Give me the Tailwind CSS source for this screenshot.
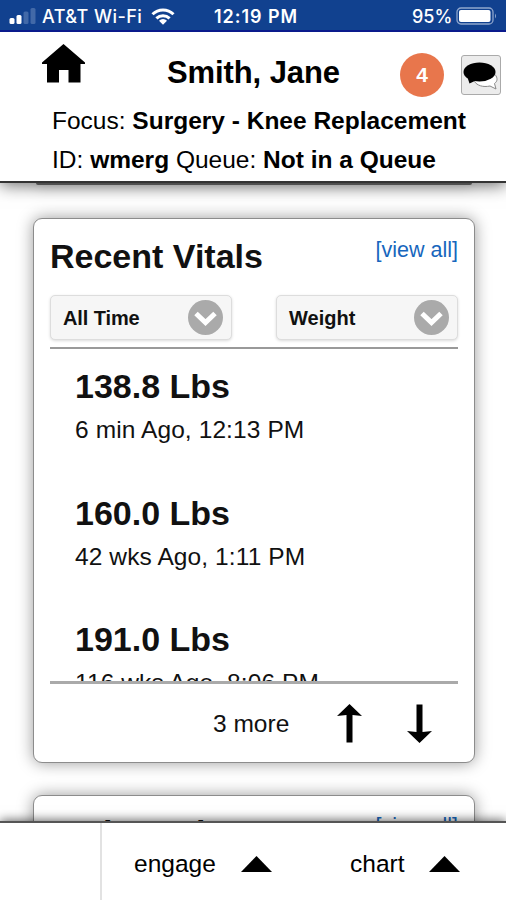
<!DOCTYPE html>
<html lang="en">
<head>
    <meta charset="UTF-8">
    <meta name="viewport" content="width=device-width, initial-scale=1.0">
    <title>Smith, Jane</title>
    <script src="https://cdn.jsdelivr.net/npm/@tailwindcss/browser@4"></script>
</head>
<body class="bg-white">
<div class="h-[900px] w-[506px] overflow-hidden bg-white flex flex-col font-['Liberation_Sans',Arial,sans-serif] text-[#111]">

    <!-- status bar -->
    <div class="relative z-20 h-8 shrink-0 bg-[#11418f] border-b-2 border-[#0a1a8c] flex items-center text-white font-['Inter',sans-serif] text-[18px] font-medium leading-none">
        <div class="w-[214px] flex items-center pl-[9px] pt-[3px]">
            <svg class="w-[27px] h-[17px]" viewBox="0 0 27 17">
                <rect x="0.5" y="10" width="5" height="6" rx="1.5" fill="#fff"/>
                <rect x="7.5" y="7" width="5" height="9" rx="1.5" fill="#fff"/>
                <rect x="14.5" y="3.5" width="5" height="12.5" rx="1.5" fill="#4269a8"/>
                <rect x="21.5" y="0" width="5" height="16" rx="1.5" fill="#4269a8"/>
            </svg>
            <span class="ml-1.5 w-[101px] whitespace-nowrap tracking-[0.45px]">AT&amp;T Wi-Fi</span>
            <svg class="ml-2 w-6 h-[17px]" viewBox="0 0 24 17">
                <g fill="none" stroke="#fff" stroke-width="3">
                    <path d="M1.5 6.3a15 15 0 0 1 21 0"/>
                    <path d="M5.4 10.4a9.5 9.5 0 0 1 13.2 0"/>
                </g>
                <path d="M8 12.7a5.8 5.8 0 0 1 8 0L12 16.8z" fill="#fff"/>
            </svg>
        </div>
        <span class="w-[85px] whitespace-nowrap font-semibold tracking-[0.95px] pt-1">12:19 PM</span>
        <span class="ml-[113px] w-[40px] whitespace-nowrap pt-1">95%</span>
        <svg class="ml-1 mt-0.5 w-[42px] h-[18px]" viewBox="0 0 42 18">
            <rect x="1" y="1" width="36" height="16" rx="4" fill="none" stroke="#8fa6cd" stroke-width="1.3"/>
            <rect x="3" y="3" width="31.5" height="12" rx="2" fill="#fff"/>
            <path d="M39 6.5q2 2.5 0 5z" fill="#8fa6cd"/>
        </svg>
    </div>

    <!-- patient header -->
    <header class="relative z-10 h-[151px] shrink-0 bg-white border-b-2 border-[#333] shadow-[0_2px_16px_rgba(0,0,0,0.6)]">
        <div class="flex h-[69px]">
            <svg class="ml-[42px] mt-3 w-[43px] h-[39px] shrink-0" viewBox="0 0 43 39">
                <path d="M21.5 0L43 18.5V20H38.5V38.5H26.5V26H17V38.5H5V20H0V18.5Z" fill="#000"/>
            </svg>
            <h1 class="ml-[82px] mt-[23px] w-[173px] whitespace-nowrap text-[31px] leading-9 tracking-[-0.1px] font-bold text-black">Smith, Jane</h1>
            <span class="ml-[60px] mt-[21px] size-11 shrink-0 rounded-full bg-[#e8764c] text-white text-[21px] font-bold flex items-center justify-center">4</span>
            <span class="ml-[17px] mt-[23px] size-10 shrink-0 rounded-[3px] border border-[#aaa] bg-[#ececec]">
                <svg class="size-[38px]" viewBox="0 0 38 38">
                    <path d="M33 18.5C36 22 35.5 25.5 32.5 27.5L34 33L28 30C21 31.5 15 29.5 12.5 25.5" fill="#fff" stroke="#888" stroke-width="1"/>
                    <ellipse cx="17.5" cy="16" rx="16" ry="9.5" fill="#000"/>
                    <path d="M5 20L7.5 27.5L15 24z" fill="#000"/>
                </svg>
            </span>
        </div>
        <p class="ml-[52px] whitespace-nowrap text-[24.5px] leading-[39px] text-black">Focus: <b>Surgery - Knee Replacement</b></p>
        <p class="ml-[52px] whitespace-nowrap text-[24.5px] leading-[39px] text-black">ID: <b>wmerg</b> Queue: <b>Not in a Queue</b></p>
    </header>

    <main class="h-[638px] shrink-0 overflow-hidden pl-[33px] pr-[31px]">
        <!-- bottom edge of the card above -->
        <div class="mx-[3px] h-0.5 rounded-b-lg bg-[#777] shadow-[0_0_14px_rgba(0,0,0,0.5)]"></div>

        <section class="mt-[33px] h-[545px] bg-white rounded-[9px] border-[1.5px] border-[#8c8c8c] shadow-[0_0_16px_rgba(0,0,0,0.4)] px-4">
            <div class="flex justify-between h-[76px] pt-[17px]">
                <h2 class="text-[34px] leading-10 font-bold whitespace-nowrap">Recent Vitals</h2>
                <a class="pt-px text-[21.5px] leading-[26px] text-[#1766bd] whitespace-nowrap">[view all]</a>
            </div>
            <div class="flex justify-between h-[54px] border-b-2 border-[#999]">
                <div class="w-[182px] h-[45px] flex items-center justify-between pl-3 pr-2 rounded-[5px] border border-[#ddd] bg-[#f6f6f6] shadow-[0_1px_3px_rgba(0,0,0,0.15)]">
                    <span class="pt-px text-[20px] tracking-[-0.1px] font-bold">All Time</span>
                    <svg class="size-[35px]" viewBox="0 0 35 35"><circle cx="17.5" cy="17.5" r="17.5" fill="#aaa"/><path d="M8 13.5L17.5 22.5L27 13.5" fill="none" stroke="#fff" stroke-width="5"/></svg>
                </div>
                <div class="w-[182px] h-[45px] flex items-center justify-between pl-3 pr-2 rounded-[5px] border border-[#ddd] bg-[#f6f6f6] shadow-[0_1px_3px_rgba(0,0,0,0.15)]">
                    <span class="pt-px text-[20px] font-bold">Weight</span>
                    <svg class="size-[35px]" viewBox="0 0 35 35"><circle cx="17.5" cy="17.5" r="17.5" fill="#aaa"/><path d="M8 13.5L17.5 22.5L27 13.5" fill="none" stroke="#fff" stroke-width="5"/></svg>
                </div>
            </div>
            <ul class="h-[335px] overflow-hidden border-b-[3px] border-[#aaa] pt-[17px] pl-[25px] whitespace-nowrap">
                <li class="h-[126.5px]">
                    <div class="text-[34px] leading-10 font-bold">138.8 Lbs</div>
                    <div class="mt-2 text-[24.5px] leading-[31px] tracking-[0.1px]">6 min Ago, 12:13 PM</div>
                </li>
                <li class="h-[126.5px]">
                    <div class="text-[34px] leading-10 font-bold">160.0 Lbs</div>
                    <div class="mt-2 text-[24.5px] leading-[31px] tracking-[0.1px]">42 wks Ago, 1:11 PM</div>
                </li>
                <li class="h-[126.5px]">
                    <div class="text-[34px] leading-10 font-bold">191.0 Lbs</div>
                    <div class="mt-2 text-[24.5px] leading-[31px] tracking-[0.1px]">116 wks Ago, 8:06 PM</div>
                </li>
            </ul>
            <div class="flex items-center h-[77px]">
                <span class="ml-[163px] w-[77px] pt-1 whitespace-nowrap text-[24.5px]">3 more</span>
                <svg class="ml-[47px] w-[25px] h-[39px] mt-0.5" viewBox="0 0 25 39"><path d="M12.5 0L25 12L15.5 11V38.5H9.5V11L0 12Z" fill="#000"/></svg>
                <svg class="ml-[45px] w-[25px] h-[39px] mt-0.5" viewBox="0 0 25 39"><path d="M12.5 39L25 27L15.5 28V.5H9.5V28L0 27Z" fill="#000"/></svg>
            </div>
        </section>

        <section class="mt-8 h-[200px] bg-white rounded-[9px] border-[1.5px] border-[#8c8c8c] shadow-[0_0_16px_rgba(0,0,0,0.4)] px-4">
            <div class="flex justify-between pt-[17px]">
                <h2 class="-mt-px text-[34px] leading-10 font-bold whitespace-nowrap">Patient Alerts</h2>
                <a class="text-[21.5px] leading-[26px] text-[#1766bd] whitespace-nowrap">[view all]</a>
            </div>
        </section>
    </main>

    <!-- bottom menu -->
    <nav class="relative z-10 h-[79px] shrink-0 bg-white border-t-2 border-[#555] shadow-[0_-1px_10px_rgba(0,0,0,0.6)] flex items-center text-[24.5px] text-black">
        <div class="w-[102px] h-full shrink-0 border-r-2 border-[#e2e2e2]"></div>
        <span class="ml-8 w-[82px] pt-[5px] leading-8">engage</span>
        <svg class="ml-[25px] w-[31px] h-4 mt-[5px]" viewBox="0 0 31 16"><path d="M15.5 0L31 16H0Z" fill="#000"/></svg>
        <span class="ml-[78px] w-[56px] pt-[5px] leading-8">chart</span>
        <svg class="ml-[23px] w-[31px] h-4 mt-[5px]" viewBox="0 0 31 16"><path d="M15.5 0L31 16H0Z" fill="#000"/></svg>
    </nav>
</div>
</body>
</html>
